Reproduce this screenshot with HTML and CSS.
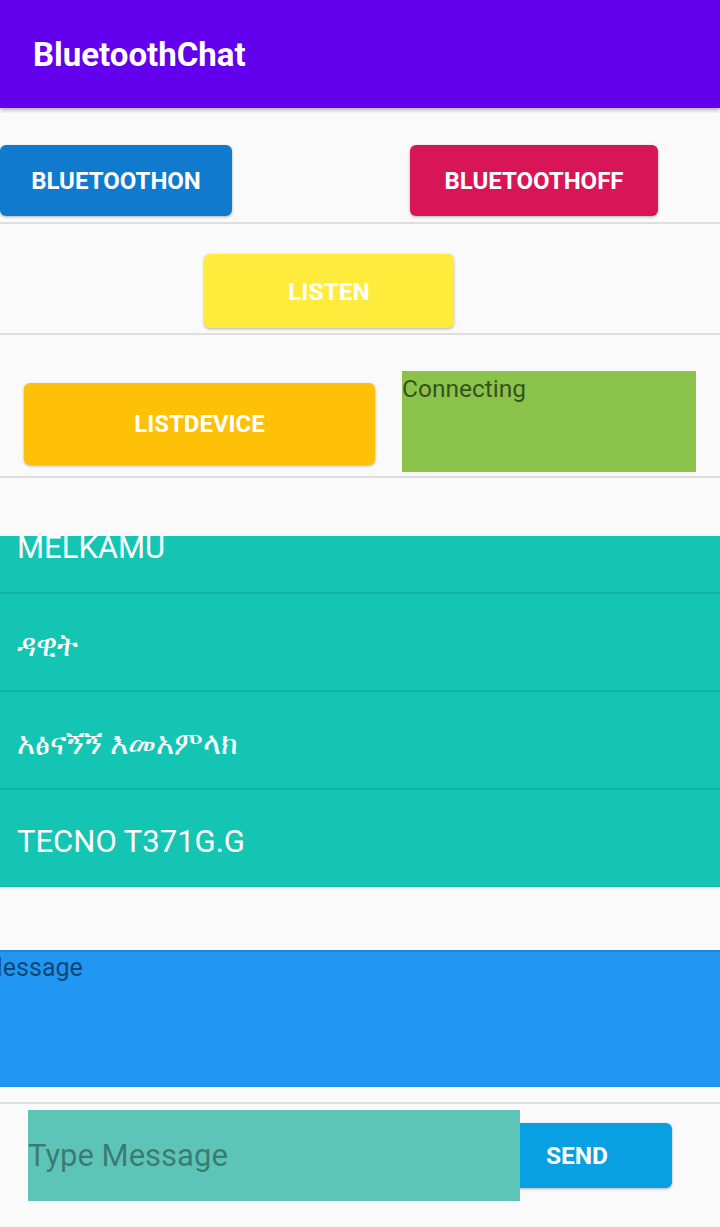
FILE: index.html
```html
<!DOCTYPE html>
<html>
<head>
<meta charset="utf-8">
<link rel="stylesheet" href="styles.css">
</head>
<body>
<header class="appbar"><h1 class="title">BluetoothChat</h1></header>
<section class="row row-one">
  <button class="btn btn-on">BLUETOOTHON</button>
  <button class="btn btn-off">BLUETOOTHOFF</button>
</section>
<section class="row row-two">
  <button class="btn btn-listen">LISTEN</button>
</section>
<section class="row row-three">
  <button class="btn btn-list">LISTDEVICE</button>
  <div class="status">Connecting</div>
</section>
<div class="devices">
  <ul class="device-list">
    <li class="device">MELKAMU</li>
    <li class="device">ዳዊት</li>
    <li class="device">አፅናኝኝ እመአምላክ</li>
    <li class="device">TECNO T371G.G</li>
  </ul>
</div>
<div class="messages"><span class="msg-text">Message</span></div>
<section class="composer">
  <div class="input">Type Message</div>
  <button class="btn btn-send">SEND</button>
</section>
</body>
</html>
```
FILE: styles.css
```css
html, body {
  margin: 0;
  padding: 0;
}
body {
  background: #fafafa;
  font-family: Roboto, "Noto Sans", "DejaVu Sans", sans-serif;
  width: 720px;
  height: 1227px;
  overflow: hidden;
}
.appbar {
  height: 108px;
  background: #6200ee;
  box-shadow: 0 2px 4px rgba(0,0,0,0.3);
  display: flex;
  align-items: center;
  padding-left: 33px;
  position: relative;
  z-index: 2;
}
.title {
  margin: 0;
  color: #fff;
  font-size: 33px;
  font-weight: 700;
}
.row {
  display: flex;
  border-bottom: 2px solid #dedede;
}
.btn {
  border: none;
  color: #fff;
  font-family: Roboto, sans-serif;
  font-weight: 700;
  font-size: 24px;
  border-radius: 6px;
  box-shadow: 0 1px 3px rgba(0,0,0,0.3);
  padding: 0;
}
.row-one {
  padding-top: 37px;
  padding-bottom: 6px;
  gap: 178px;
}
.btn-on {
  width: 232px;
  height: 71px;
  background: #0f7ace;
}
.btn-off {
  width: 248px;
  height: 71px;
  background: #d81557;
}
.row-two {
  padding-top: 30px;
  padding-bottom: 5px;
  padding-left: 204px;
}
.btn-listen {
  width: 250px;
  height: 74px;
  background: #ffeb3b;
  font-size: 24.5px;
}
.row-three {
  padding-top: 36px;
  padding-bottom: 4px;
  padding-left: 24px;
  gap: 27px;
  align-items: flex-start;
}
.btn-list {
  width: 351px;
  height: 82px;
  margin-top: 12px;
  background: #ffc107;
}
.status {
  width: 294px;
  height: 101px;
  background: #8bc34a;
  color: rgba(0,0,0,0.62);
  font-size: 24.5px;
  line-height: 36px;
}
.devices {
  margin-top: 58px;
  height: 351px;
  overflow: hidden;
  background: #15c5b3;
}
.device-list {
  list-style: none;
  margin: -40px 0 0 0;
  padding: 0;
}
.device {
  height: 98px;
  border-bottom: 2px solid #12b3a3;
  display: flex;
  align-items: center;
  padding-left: 17px;
  padding-top: 6px;
  box-sizing: border-box;
  color: #fff;
  font-size: 31px;
}
.messages {
  margin-top: 63px;
  height: 137px;
  box-sizing: border-box;
  background: #2196f3;
  border-top: 2px solid #1a86da;
  overflow: hidden;
}
.msg-text {
  display: block;
  margin-left: -19px;
  color: rgba(0,0,0,0.55);
  font-size: 25px;
  line-height: 32px;
}
.composer {
  margin-top: 15px;
  border-top: 2px solid #dedede;
  padding: 6px 0 0 28px;
  display: flex;
  align-items: flex-start;
}
.input {
  width: 492px;
  height: 91px;
  background: #5dc4b8;
  color: rgba(0,0,0,0.38);
  font-size: 31px;
  display: flex;
  align-items: center;
  position: relative;
  z-index: 1;
}
.btn-send {
  width: 190px;
  height: 65px;
  margin-top: 13px;
  margin-left: -38px;
  background: #08a0e3;
  font-size: 24.5px;
}
```
